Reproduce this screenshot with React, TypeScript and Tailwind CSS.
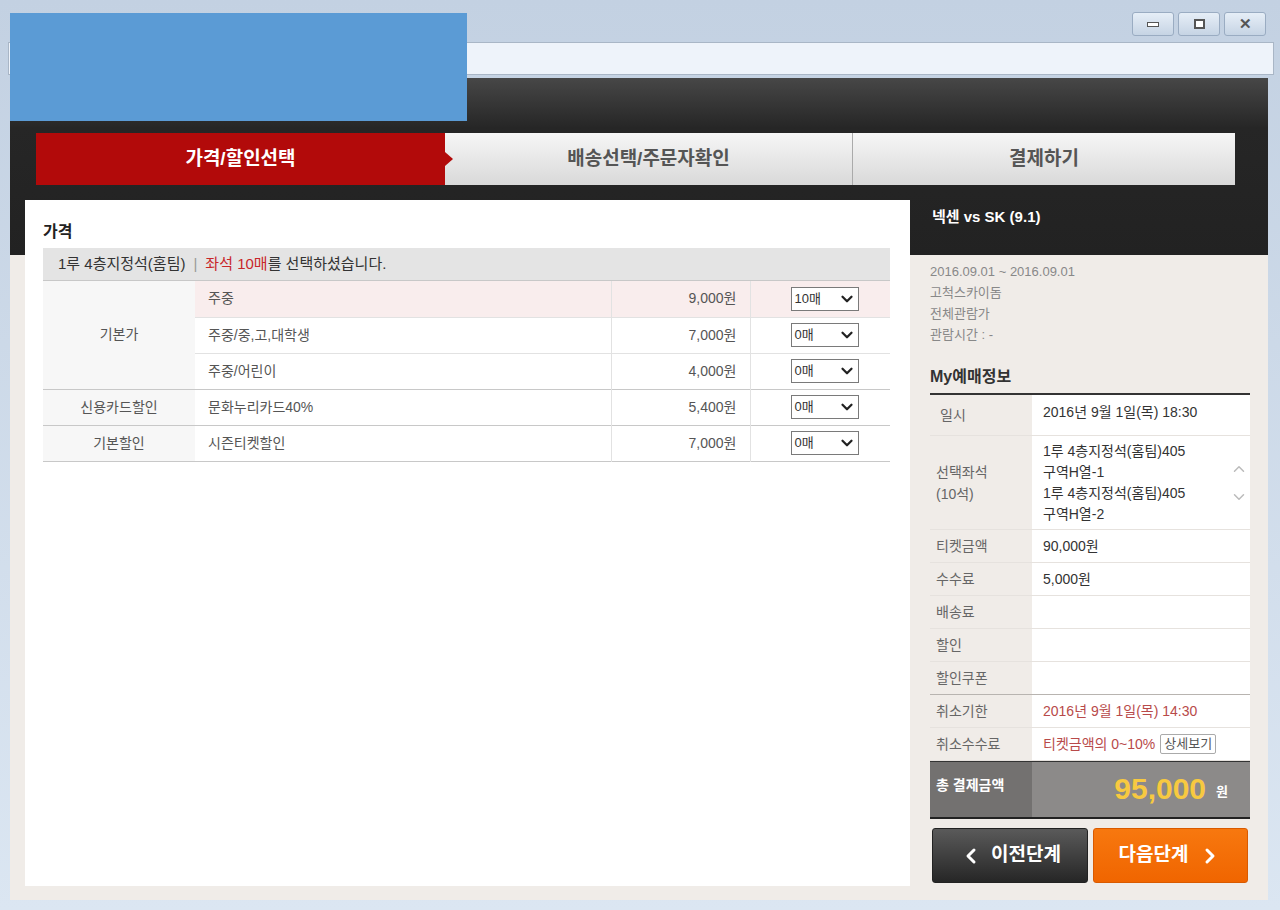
import { ChevronDown, ChevronLeft, ChevronRight, ChevronUp } from 'lucide-react';

const font = { fontFamily: '"Liberation Sans", "Noto Sans CJK KR", sans-serif' };

type PriceRow = { group?: string; span?: number; name: string; price: string; qty: string; active?: boolean; groupEnd?: boolean };

const priceRows: PriceRow[] = [
  { group: '기본가', span: 3, name: '주중', price: '9,000원', qty: '10매', active: true },
  { name: '주중/중,고,대학생', price: '7,000원', qty: '0매' },
  { name: '주중/어린이', price: '4,000원', qty: '0매', groupEnd: true },
  { group: '신용카드할인', span: 1, name: '문화누리카드40%', price: '5,400원', qty: '0매', groupEnd: true },
  { group: '기본할인', span: 1, name: '시즌티켓할인', price: '7,000원', qty: '0매', groupEnd: true },
];

function QtySelect({ value }: { value: string }) {
  return (
    <div className="ml-[40px] flex h-[24px] w-[68px] items-center justify-between border border-[#7a7a7a] bg-white pl-[3px] pr-[2px] text-[13px] text-[#333]">
      <span>{value}</span>
      <ChevronDown size={18} strokeWidth={3} className="text-[#222]" />
    </div>
  );
}

function Tabs() {
  return (
    <div className="flex h-[52px] w-[1199px] ml-[26px]">
      <div className="relative flex w-[409px] items-center justify-center bg-[#b20a0a] text-[19px] font-bold text-white">
        가격/할인선택
        <span className="absolute right-[-8px] top-[19px] h-0 w-0 border-y-[7px] border-l-[8px] border-y-transparent border-l-[#b20a0a]" />
      </div>
      <div className="flex w-[408px] items-center justify-center border-r border-[#aaa] bg-[linear-gradient(#f6f6f6,#d9d9d9)] text-[19px] font-bold text-[#555]">
        배송선택/주문자확인
      </div>
      <div className="flex flex-1 items-center justify-center bg-[linear-gradient(#f6f6f6,#d9d9d9)] text-[19px] font-bold text-[#555]">
        결제하기
      </div>
    </div>
  );
}

function PricePanel() {
  return (
    <div className="h-[686px] w-[885px] bg-white pl-[18px] pt-[20px]">
      <div className="text-[16px] font-bold text-[#222]">가격</div>
      <div className="mt-[4px] w-[847px]">
        <div className="flex h-[33px] items-center border-b border-[#c8c8c8] bg-[#e4e4e4] pl-[15px] text-[15px] text-[#333]">
          1루 4층지정석(홈팀)
          <span className="mx-[8px] text-[#999]">|</span>
          <span className="text-[#c8262a]">좌석 10매</span>를 선택하셨습니다.
        </div>
        <table className="w-full table-fixed border-collapse text-[14px] text-[#555]">
          <colgroup>
            <col className="w-[152px]" />
            <col className="w-[416px]" />
            <col className="w-[139px]" />
            <col className="w-[140px]" />
          </colgroup>
          <tbody>
            {priceRows.map((r) => (
              <tr key={r.name} className={`h-[36px] border-b ${r.groupEnd ? 'border-[#c8c8c8]' : 'border-[#e2e2e2]'}`}>
                {r.group && (
                  <td rowSpan={r.span} className="border-b border-[#c8c8c8] bg-[#f7f7f7] text-center align-middle">
                    {r.group}
                  </td>
                )}
                <td className={`pl-[13px] ${r.active ? 'bg-[#f9eded]' : ''}`}>{r.name}</td>
                <td className={`border-x border-[#e2e2e2] pr-[13px] text-right ${r.active ? 'bg-[#f9eded]' : ''}`}>{r.price}</td>
                <td className={r.active ? 'bg-[#f9eded]' : ''}>
                  <QtySelect value={r.qty} />
                </td>
              </tr>
            ))}
          </tbody>
        </table>
      </div>
    </div>
  );
}

function InfoRow({ label, children, h = 'h-[33px]', strong }: { label: React.ReactNode; children?: React.ReactNode; h?: string; strong?: boolean }) {
  return (
    <div className={`flex ${h} border-b ${strong ? 'border-[#b8b4b0]' : 'border-[#e6e2de]'}`}>
      <div className="flex w-[102px] items-center pl-[6px] text-[14px] text-[#666]">{label}</div>
      <div className="flex flex-1 items-center bg-white pl-[11px] text-[14px] text-[#333]">{children}</div>
    </div>
  );
}

function SidePanel() {
  return (
    <div className="flex w-[358px] flex-col">
      <div className="flex h-[57px] items-start pl-[22px] pt-[6px] text-[15px] font-bold text-white">넥센 vs SK (9.1)</div>
      <div className="px-[20px] pt-[4px]">
        <div className="text-[13px] leading-[21px] text-[#888]">
          <div>2016.09.01 ~ 2016.09.01</div>
          <div>고척스카이돔</div>
          <div>전체관람가</div>
          <div>관람시간 : -</div>
        </div>
        <div className="mt-[20px] text-[16px] font-bold text-[#333]">My예매정보</div>
        <div className="mt-[4px] w-[320px] border-t-2 border-[#333]">
          <InfoRow label={<span className="pl-[4px]">일시</span>} h="h-[41px]">
            <span className="-mt-[6px]">2016년 9월 1일(목) 18:30</span>
          </InfoRow>
          <InfoRow
            h="h-[94px]"
            label={
              <div className="leading-[22px]">
                선택좌석
                <br />
                (10석)
              </div>
            }
          >
            <div className="flex w-full items-center">
              <div className="flex-1 leading-[21px]">
                <div>1루 4층지정석(홈팀)405</div>
                <div>구역H열-1</div>
                <div>1루 4층지정석(홈팀)405</div>
                <div>구역H열-2</div>
              </div>
              <div className="mr-[2px] flex flex-col gap-[10px] text-[#bbb]">
                <ChevronUp size={18} />
                <ChevronDown size={18} />
              </div>
            </div>
          </InfoRow>
          <InfoRow label="티켓금액">90,000원</InfoRow>
          <InfoRow label="수수료">5,000원</InfoRow>
          <InfoRow label="배송료" />
          <InfoRow label="할인" />
          <InfoRow label="할인쿠폰" strong />
          <InfoRow label="취소기한">
            <span className="text-[#b84a4a]">2016년 9월 1일(목) 14:30</span>
          </InfoRow>
          <InfoRow label="취소수수료">
            <span className="text-[#b84a4a]">티켓금액의 0~10%</span>
            <span className="ml-[5px] rounded-[2px] border border-[#aaa] px-[3px] text-[13px] leading-[18px] text-[#555]">상세보기</span>
          </InfoRow>
        </div>
        <div className="flex h-[58px] w-[320px] border-y-2 border-t border-[#333] border-b-[#222]">
          <div className="flex w-[102px] items-center pl-[6px] pb-[8px] bg-[#737170] text-[14px] font-bold text-white">총 결제금액</div>
          <div className="flex flex-1 items-center justify-end gap-[10px] bg-[#8c8a89] pr-[22px] pb-[2px]">
            <span className="text-[30px] font-bold text-[#f7c940]">95,000</span>
            <span className="pt-[6px] text-[13px] font-bold text-white">원</span>
          </div>
        </div>
        <div className="mt-[9px] flex gap-[5px] pl-[2px]">
          <button className="flex h-[55px] w-[156px] items-center justify-center gap-[8px] rounded-[3px] border border-[#222] bg-[linear-gradient(#5a5a5a,#262626)] text-[19px] font-bold text-white">
            <ChevronLeft size={24} strokeWidth={3} />
            이전단계
          </button>
          <button className="flex h-[55px] w-[155px] items-center justify-center gap-[10px] rounded-[3px] border border-[#d95a00] bg-[linear-gradient(#f7780f,#f06500)] text-[19px] font-bold text-white">
            다음단계
            <ChevronRight size={24} strokeWidth={3} />
          </button>
        </div>
      </div>
    </div>
  );
}

export default function App() {
  return (
    <div style={font} className="relative h-[910px] w-[1280px] overflow-hidden bg-[linear-gradient(#c3d1e2,#dbe6f2)]">
      {/* title bar */}
      <div className="flex h-[42px] items-start justify-end gap-[4px] pr-[14px] pt-[12px]">
        <div className="flex h-[24px] w-[42px] items-center justify-center rounded-[3px] border border-[#9aacc2] bg-[linear-gradient(#e6eef7,#c6d4e4)]">
          <span className="h-[5px] w-[12px] border border-[#555] bg-white" />
        </div>
        <div className="flex h-[24px] w-[42px] items-center justify-center rounded-[3px] border border-[#9aacc2] bg-[linear-gradient(#e6eef7,#c6d4e4)]">
          <span className="h-[10px] w-[11px] border-2 border-[#555] bg-white" />
        </div>
        <div className="flex h-[24px] w-[42px] items-center justify-center rounded-[3px] border border-[#9aacc2] bg-[linear-gradient(#e6eef7,#c6d4e4)] text-[15px] font-bold text-[#555]">
          ✕
        </div>
      </div>
      {/* address bar */}
      <div className="ml-[8px] mr-[6px] h-[33px] border border-[#a9b6c6] bg-[#eef3fa]" />
      {/* page */}
      <div className="ml-[10px] mr-[12px] mt-[3px] h-[822px] bg-[linear-gradient(#474747_0px,#262626_50px,#222_177px,#f0ece8_177px)] pt-[55px]">
        <Tabs />
        <div className="mt-[15px] flex pl-[15px]">
          <PricePanel />
          <SidePanel />
        </div>
      </div>
      {/* redaction block */}
      <div className="absolute left-[10px] top-[13px] h-[108px] w-[457px] bg-[#5b9bd5]" />
    </div>
  );
}
